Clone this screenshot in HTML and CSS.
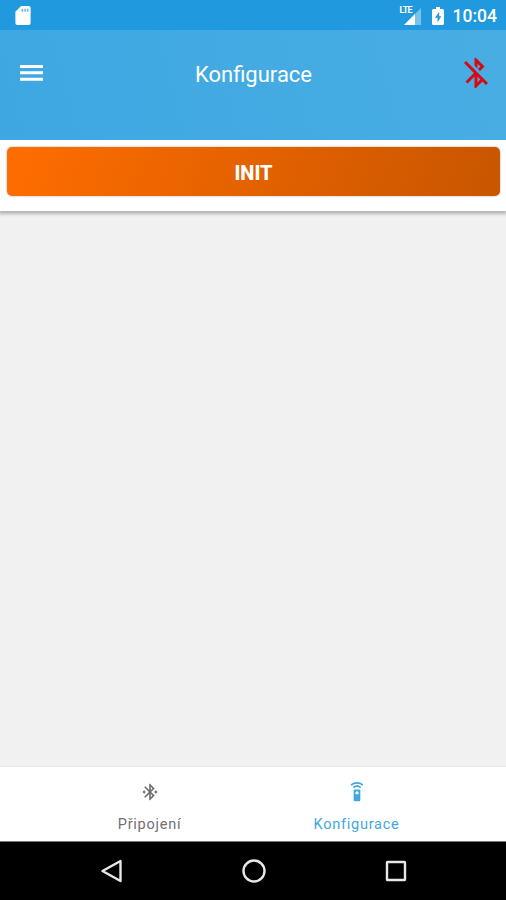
FILE: index.html
```
<!DOCTYPE html>
<html lang="cs">
<head>
    <meta charset="UTF-8">
    <meta name="viewport" content="width=device-width, initial-scale=1.0">
    <title>Konfigurace</title>
    <link rel="stylesheet" href="styles.css">
</head>
<body>
    <div class="status-bar">
        <svg class="sd-icon" viewBox="0 0 16 20">
            <path fill="#fff" d="M6 0h8a2 2 0 0 1 2 2v16a2 2 0 0 1-2 2H2a2 2 0 0 1-2-2V6z"/>
            <path fill="#2199de" opacity=".65" d="M6.5 3h1.800v3H6.500zM9.300 3h1.800v3H9.300zM12.100 3h1.800v3h-1.800z"/>
        </svg>
        <div class="status-right">
            <div class="signal">
                <svg class="signal-icon" viewBox="0 0 17 17">
                    <path fill="#fff" opacity=".4" d="M17 0v17H0z"/>
                    <path fill="#fff" d="M11 6v11H0z"/>
                </svg>
                <span class="lte">LTE</span>
            </div>
            <svg class="battery-icon" viewBox="0 0 12 18">
                <path fill="#fff" d="M4 0h4v2h2.500A1.500 1.500 0 0 1 12 3.500v13a1.500 1.500 0 0 1-1.500 1.500h-9A1.500 1.500 0 0 1 0 16.500v-13A1.500 1.500 0 0 1 1.500 2H4z"/>
                <path fill="#2199de" d="M7.200 4.800L3 10.800h2.500v4.700L9.300 9.300H7.200z"/>
            </svg>
            <span class="clock">10:04</span>
        </div>
    </div>

    <header class="header">
        <svg class="menu-icon" viewBox="0 0 23 16">
            <path fill="#fff" d="M0 0h23v3H0zM0 6.300h23v3H0zM0 12.700h23v3H0z"/>
        </svg>
        <h1>Konfigurace</h1>
        <svg class="bluetooth-off" viewBox="0 0 24 24">
            <path fill="#d60a12" d="M13 5.830l1.880 1.880-1.600 1.600 1.410 1.410 3.020-3.020L12 2h-1v5.030l2 2v-3.200zM5.410 4L4 5.410 10.590 12 5 17.590 6.410 19 11 14.410V22h1l4.290-4.290 2.300 2.290L20 18.590 5.410 4zM13 18.170v-3.760l1.880 1.880L13 18.170z"/>
        </svg>
    </header>

    <main class="content">
        <div class="card">
            <button class="init-button">INIT</button>
        </div>
    </main>

    <nav class="tabs">
        <a class="tab">
            <svg class="tab-icon" viewBox="0 0 24 24">
                <path fill="currentColor" d="M7 12l-2-2-2 2 2 2 2-2zm10.710-4.290L12 2h-1v7.590L6.410 5 5 6.410 10.590 12 5 17.590 6.410 19 11 14.410V22h1l5.710-5.710-4.300-4.290 4.300-4.290zM13 5.830l1.880 1.880L13 9.590V5.830zm1.880 10.460L13 18.170v-3.760l1.880 1.880zM19 10l-2 2 2 2 2-2-2-2z"/>
            </svg>
            <span>Připojení</span>
        </a>
        <a class="tab active">
            <svg class="tab-icon" viewBox="0 0 24 24">
                <path fill="currentColor" d="M15 9H9c-.55 0-1 .45-1 1v12c0 .55.45 1 1 1h6c.55 0 1-.45 1-1V10c0-.55-.45-1-1-1zm-3 6c-1.100 0-2-.9-2-2s.9-2 2-2 2 .9 2 2-.9 2-2 2zM7.050 6.050l1.410 1.410C9.370 6.560 10.620 6 12 6s2.630.56 3.540 1.460l1.410-1.410C15.680 4.780 13.930 4 12 4s-3.680.78-4.950 2.050zM12 0C8.960 0 6.210 1.230 4.220 3.220l1.410 1.410C7.260 3.010 9.510 2 12 2s4.740 1.010 6.360 2.640l1.410-1.410C17.790 1.230 15.040 0 12 0z"/>
            </svg>
            <span>Konfigurace</span>
        </a>
    </nav>

    <div class="system-nav">
        <svg viewBox="0 0 26 26">
            <path d="M21.500 3v20L3.500 13z"/>
        </svg>
        <svg viewBox="0 0 26 26">
            <circle cx="13" cy="13" r="10.500"/>
        </svg>
        <svg viewBox="0 0 26 26">
            <rect x="4" y="4" width="18" height="18" rx=".5"/>
        </svg>
    </div>
</body>
</html>
```
FILE: styles.css
```
* {
    box-sizing: border-box;
}
body {
    font-family: Roboto, sans-serif;
    margin: 0;
    height: 100vh;
    display: flex;
    flex-direction: column;
    background-color: #f1f1f1;
    overflow: hidden;
}
svg {
    display: block;
    flex-shrink: 0;
}
/* Status bar */
.status-bar {
    height: 30px;
    flex-shrink: 0;
    display: flex;
    justify-content: space-between;
    align-items: center;
    padding: 1px 9px 0 15px;
    background-color: #2199de;
}
.sd-icon {
    width: 16px;
    height: 19px;
}
.status-right {
    display: flex;
    align-items: center;
    color: #fff;
}
.signal {
    position: relative;
    width: 21px;
    height: 18px;
    padding: 1px 0 0 4px;
    margin-right: 11px;
}
.signal-icon {
    width: 17px;
    height: 17px;
}
.lte {
    position: absolute;
    top: -1px;
    left: 0;
    font-size: 9px;
    line-height: 9px;
    font-weight: 700;
    letter-spacing: -0.8px;
}
.battery-icon {
    width: 12px;
    height: 18px;
    margin-right: 9px;
}
.clock {
    font-size: 17.5px;
    line-height: 20px;
    font-weight: 500;
}
/* Header */
.header {
    height: 110px;
    flex-shrink: 0;
    display: flex;
    justify-content: space-between;
    align-items: flex-start;
    padding: 25px 12px 0 20px;
    background: linear-gradient(75deg, #3ea7e2, #48ade3);
}
.menu-icon {
    width: 23px;
    height: 16px;
    margin: 10px 6px 0 0;
}
.header h1 {
    margin: 6px 0 0;
    font-size: 22px;
    line-height: 27px;
    font-weight: 400;
    color: #fff;
}
.bluetooth-off {
    width: 36px;
    height: 36px;
}
/* Content */
.content {
    flex: 1;
}
.card {
    height: 71px;
    padding: 7px 6px 0 7px;
    background-color: #fff;
    box-shadow: 0 2px 3px 1px rgba(0, 0, 0, 0.25);
    clip-path: inset(0 0 -8px 0);
}
.init-button {
    display: block;
    width: 100%;
    height: 49px;
    padding: 2px 0 0;
    border: none;
    border-radius: 5px;
    background: linear-gradient(110deg, #ff6d00, #c85600);
    box-shadow: 0 0 2px rgba(0, 0, 0, 0.4);
    font-family: inherit;
    font-size: 20px;
    font-weight: 800;
    color: #fff;
}
/* Bottom tabs */
.tabs {
    height: 75px;
    flex-shrink: 0;
    display: flex;
    justify-content: center;
    padding-top: 15px;
    border-top: 1px solid #e8e8e8;
    background-color: #fff;
}
.tab {
    width: 207px;
    display: flex;
    flex-direction: column;
    align-items: center;
    font-size: 14.5px;
    line-height: 18px;
    letter-spacing: 0.75px;
    color: #707070;
}
.tab.active {
    color: #40a7e1;
}
.tab-icon {
    width: 20px;
    height: 20px;
    margin-bottom: 14px;
}
/* System navigation */
.system-nav {
    height: 59px;
    flex-shrink: 0;
    display: flex;
    justify-content: center;
    gap: 116px;
    padding: 16px 0 0 1px;
    border-top: 1px solid #777;
    background-color: #000;
}
.system-nav svg {
    width: 26px;
    height: 26px;
    fill: none;
    stroke: #e8e8e8;
    stroke-width: 2.4;
    stroke-linejoin: round;
}
```
